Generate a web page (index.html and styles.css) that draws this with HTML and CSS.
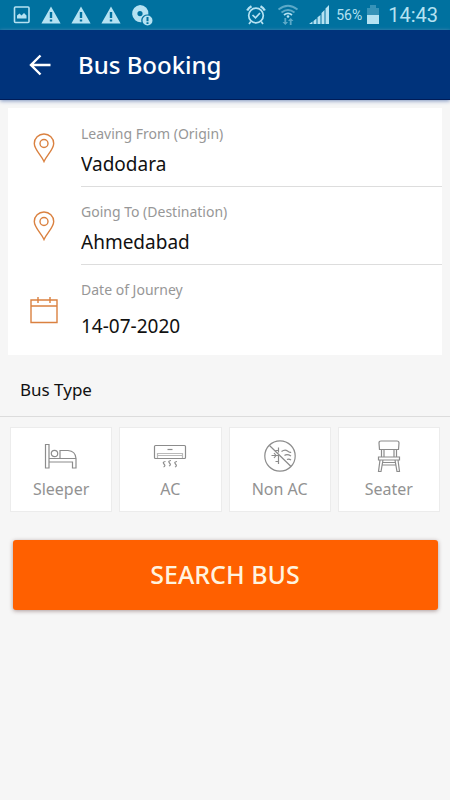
FILE: index.html
```html
<!DOCTYPE html>
<html lang="en">
<head>
<meta charset="utf-8">
<meta name="viewport" content="width=device-width, initial-scale=1">
<title>Bus Booking</title>
<link rel="stylesheet" href="styles.css">
</head>
<body>
<svg class="defs" aria-hidden="true">
  <symbol id="warning" viewBox="0 0 20 18"><path fill="currentColor" fill-rule="evenodd" d="M10 0.5 L19.6 17.5 H0.4 Z M8.8 6 V12 H11.2 V6 Z M8.8 13.4 V15.6 H11.2 V13.4 Z"/></symbol>
  <symbol id="pin" viewBox="0 0 22 30"><path d="M11 28.5 C8.500 22.500 1.300 16.500 1.300 10.500 A9.700 9.500 0 0 1 20.700 10.500 C20.700 16.500 13.500 22.500 11 28.500 Z"/><circle cx="11" cy="10.500" r="4"/></symbol>
</svg>

<div class="status">
  <div class="status-group notices">
    <svg width="18" height="18" viewBox="0 0 18 18"><rect x="1.500" y="1" width="14.500" height="15.500" rx="1" fill="none" stroke="currentColor" stroke-width="1.600"/><path d="M4 12.500V9.500L6.500 7.500 8.500 9.500 11 7 13.500 9.500V12.500Z" fill="currentColor"/></svg>
    <svg width="20" height="18"><use href="#warning"/></svg>
    <svg width="20" height="18"><use href="#warning"/></svg>
    <svg width="20" height="18"><use href="#warning"/></svg>
    <svg width="22" height="21" viewBox="0 0 22 21"><path fill="currentColor" fill-rule="evenodd" d="M9 0A8.500 8.500 0 1 0 10.500 17.200A6 6 0 0 1 17.400 9.500A8.500 8.500 0 0 0 9 0ZM9 6A2.600 2.600 0 1 1 9 11.200A2.600 2.600 0 0 1 9 6Z"/><path fill="currentColor" fill-rule="evenodd" d="M16.500 10.500A5 5 0 1 1 16.500 20.500A5 5 0 0 1 16.500 10.500ZM15.500 12V16.200H17.500V12ZM15.500 17.200V19H17.500V17.200Z"/></svg>
  </div>
  <div class="status-group">
    <svg class="alarm" width="20" height="20" viewBox="0 0 20 20" fill="none" stroke="currentColor" stroke-width="1.700"><circle cx="10" cy="10.500" r="7.300"/><path d="M6.500 10L9.500 12.800 14 8M4.800 16.500L3 19M15.200 16.500L17 19"/><path d="M1.200 5.500A11 11 0 0 1 5.500 1.300M18.800 5.500A11 11 0 0 0 14.500 1.300" stroke-width="2.400"/></svg>
    <svg class="wifi" width="22" height="22" viewBox="0 0 22 22" fill="none" stroke="currentColor" stroke-width="1.800"><path d="M1.500 5.500Q11-2 20.500 5.500M4.500 8.500Q11 3.500 17.500 8.500" opacity=".5"/><path d="M7 11Q11 7.800 15 11"/><circle cx="11" cy="12.500" r="1.300" fill="currentColor" stroke="none"/><g opacity=".5"><path d="M8.300 14V20M13.700 15V21"/><path d="M5.500 18L8.300 21 11 18ZM11 17L13.700 14 16.500 17Z" fill="currentColor" stroke="none"/></g></svg>
    <svg class="signal" width="22" height="20" viewBox="0 0 22 20"><path fill="currentColor" d="M1 19L4.500 16.500V19ZM5.500 16L8.500 13.500V19H5.500ZM9.500 12.200L12.500 10V19H9.500ZM13.500 8L16.500 5V19H13.500ZM17.500 3.500L21 0V19H17.500Z"/></svg>
    <span class="percent">56%</span>
    <svg class="battery" width="14" height="20" viewBox="0 0 14 20"><path fill="currentColor" opacity=".3" d="M4 0H10V3H13V10H1V3H4Z"/><path fill="currentColor" d="M1 10H13V19H1Z"/></svg>
    <time class="clock">14:43</time>
  </div>
</div>

<header class="bar">
  <button class="back" type="button" aria-label="Back"><svg width="22" height="22" viewBox="0 0 22 22" fill="none" stroke="currentColor" stroke-width="2.400"><path d="M11.500 1.500L2 11 11.500 20.500M2 11H21.500"/></svg></button>
  <h1>Bus Booking</h1>
</header>

<form class="search">
  <div class="trip">
    <div class="field">
      <svg class="pin" width="22" height="30"><use href="#pin"/></svg>
      <div class="entry"><label for="origin">Leaving From (Origin)</label><input id="origin" type="text" value="Vadodara"></div>
    </div>
    <div class="field">
      <svg class="pin" width="22" height="30"><use href="#pin"/></svg>
      <div class="entry"><label for="destination">Going To (Destination)</label><input id="destination" type="text" value="Ahmedabad"></div>
    </div>
    <div class="field">
      <svg width="28" height="28" viewBox="0 0 28 28"><path d="M1 4H27V26.500H1ZM1 10H27M8 1V7M20 1V7"/></svg>
      <div class="entry date"><label for="journey">Date of Journey</label><input id="journey" type="text" value="14-07-2020"></div>
    </div>
  </div>

  <h2>Bus Type</h2>
  <div class="types">
    <button type="button"><svg width="34" height="32" viewBox="0 0 34 32"><path d="M1.500 4.500H5V18.500H32V28H28.500V22H5V28H1.500ZM5 18.500V22M16 18V10.500H24Q31.500 11 32 18.500"/><circle cx="10.500" cy="13.500" r="3.200"/></svg><span>Sleeper</span></button>
    <button type="button"><svg width="34" height="32" viewBox="0 0 34 32"><rect x="1.500" y="5.500" width="31" height="13" rx="1"/><path d="M14.500 9.500H19.500"/><path d="M4.500 18V13.500H29.500V18M5 15.500H29" opacity=".6"/><path d="M12.500 21.500Q9 22 11 24T10.500 27M18 20.500Q14.500 21 16.500 23T16 26M24 21.500Q20.500 22 22.500 24T22 27"/></svg><span>AC</span></button>
    <button type="button"><svg width="34" height="32" viewBox="0 0 34 32"><circle cx="17" cy="16" r="15.200"/><path d="M6.500 5.500L28 26.500M8.500 15.500H16M15.500 7.500V12.500M15.500 16V24M11 13L13 15.500 11 18M12.500 10.500H15.500M12.500 21.500H15.500M18.500 11.500Q22 9 24.500 11T28 12M21.500 15.500Q24 13.500 28 16M24 19.500Q26 18.500 28 20"/></svg><span>Non AC</span></button>
    <button type="button"><svg width="34" height="32" viewBox="0 0 34 32"><path d="M9 1H25Q27 1 27 3L26.500 9.500H7.500L7 3Q7 1 9 1ZM9.500 9.500V17M12 9.500V17M22 9.500V17M24.500 9.500V17M6.500 17H27.500V20H6.500ZM8 20L6.500 31.500H9L11 20M23 20L25 31.500H27.500L26 20M10.500 22.500H23.500M10.500 25H23.500"/></svg><span>Seater</span></button>
  </div>
  <button class="submit" type="submit">SEARCH BUS</button>
</form>
</body>
</html>
```

FILE: styles.css
```css
* { box-sizing: border-box; }

body {
  margin: 0;
  min-height: 100vh;
  background: #f6f6f6;
  color: #111;
  font-family: "Noto Sans", "Open Sans", sans-serif;
}

button, input { font: inherit; }
svg { flex: none; display: block; }

.defs { position: absolute; width: 0; height: 0; }

.status {
  display: flex;
  justify-content: space-between;
  align-items: center;
  height: 30px;
  padding: 0 12px 0 13px;
  background: #00719f;
  color: #b5e2f2;
}
.status-group { display: flex; align-items: center; }
.notices { gap: 10px; }
.alarm { margin-right: 11px; }
.wifi { margin-right: 9px; }
.signal { margin-right: 6px; }
.percent { font-family: Roboto, sans-serif; font-size: 14px; }
.battery { margin: 0 8px 0 4px; }
.clock { font-family: Roboto, sans-serif; font-size: 20px; }

.bar {
  display: flex;
  align-items: center;
  gap: 27px;
  height: 70px;
  padding: 0 29px;
  background: #00337b;
  border-bottom: 1px solid #001c58;
  box-shadow: 0 1px 4px #7d94c0;
  color: #fff;
}
.back { padding: 0; border: 0; background: none; color: inherit; }
h1 { margin: 0; font-size: 24px; font-weight: 500; }

.trip {
  margin: 8px 8px 0;
  padding-top: 1px;
  background: #fff;
}
.field { display: flex; align-items: stretch; }
.field svg {
  align-self: center;
  margin: 0 23px 0 22px;
  fill: none;
  stroke: #da8140;
  stroke-width: 1.400;
}
.field .pin { margin: 0 26px 0 25px; }
.entry {
  flex: 1;
  min-width: 0;
  display: flex;
  flex-direction: column;
  gap: 6px;
  padding: 15px 0 8px;
  border-bottom: 1px solid #ddd;
}
.entry label { font-size: 14px; line-height: 20px; color: #979797; }
.entry input {
  width: 100%;
  height: 28px;
  padding: 0;
  border: 0;
  background: none;
  color: #111;
  font-size: 19px;
}
.date { gap: 12px; padding-bottom: 15px; border-bottom: 0; }

h2 {
  margin: 0;
  padding: 21px 20px 12px;
  border-bottom: 1px solid #dcdcdc;
  font-size: 17px;
  line-height: 28px;
  font-weight: 400;
}

.types {
  display: grid;
  grid-template-columns: repeat(4, 1fr);
  gap: 7px;
  padding: 10px 10px 0;
}
.types button {
  display: flex;
  flex-direction: column;
  align-items: center;
  gap: 5px;
  padding: 12px 0 10px;
  border: 1px solid #ececec;
  background: #fff;
  color: #929292;
  font-size: 16px;
  line-height: 24px;
}
.types svg { fill: none; stroke: #8c8c8c; stroke-width: 1.200; }

.submit {
  display: block;
  width: calc(100% - 25px);
  height: 70px;
  margin: 28px auto 0;
  padding: 0 0 2px;
  border: 0;
  border-radius: 3px;
  background: #ff6000;
  box-shadow: 0 1px 4px #a99;
  color: #fff3df;
  font-size: 25px;
  font-weight: 500;
}
```
